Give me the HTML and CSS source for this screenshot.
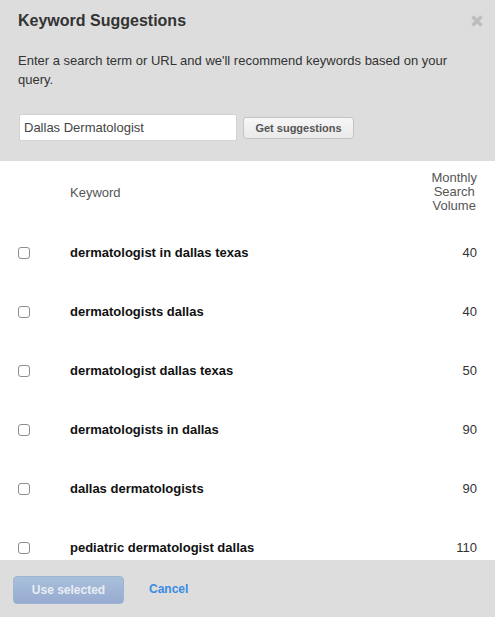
FILE: index.html
```html
<!DOCTYPE html>
<html>
<head>
<meta charset="utf-8">
<link rel="stylesheet" href="styles.css">
</head>
<body>
<div class="modal">
  <div class="head">
    <div class="title-row">
      <h1 class="title">Keyword Suggestions</h1>
      <svg class="close" width="12" height="12" viewBox="0 0 12 12"><path d="M1.5 1.5 L10.5 10.5 M10.5 1.5 L1.5 10.5" stroke="#bdbdbd" stroke-width="3.4" stroke-linecap="butt"/></svg>
    </div>
    <p class="desc">Enter a search term or URL and we'll recommend keywords based on your query.</p>
    <div class="search">
      <div class="input">Dallas Dermatologist</div>
      <div class="btn-get">Get suggestions</div>
    </div>
  </div>
  <div class="body">
    <div class="thead">
      <div class="c-check"></div>
      <div class="c-kw th">Keyword</div>
      <div class="c-vol th vol-head">Monthly<br>Search<br>Volume</div>
    </div>
    <div class="row"><div class="c-check"><span class="cb"></span></div><div class="c-kw kw">dermatologist in dallas texas</div><div class="c-vol num">40</div></div>
    <div class="row"><div class="c-check"><span class="cb"></span></div><div class="c-kw kw">dermatologists dallas</div><div class="c-vol num">40</div></div>
    <div class="row"><div class="c-check"><span class="cb"></span></div><div class="c-kw kw">dermatologist dallas texas</div><div class="c-vol num">50</div></div>
    <div class="row"><div class="c-check"><span class="cb"></span></div><div class="c-kw kw">dermatologists in dallas</div><div class="c-vol num">90</div></div>
    <div class="row"><div class="c-check"><span class="cb"></span></div><div class="c-kw kw">dallas dermatologists</div><div class="c-vol num">90</div></div>
    <div class="row"><div class="c-check"><span class="cb"></span></div><div class="c-kw kw">pediatric dermatologist dallas</div><div class="c-vol num">110</div></div>
  </div>
  <div class="foot">
    <div class="btn-use">Use selected</div>
    <a class="cancel">Cancel</a>
  </div>
</div>
</body>
</html>
```

FILE: styles.css
```css
html, body {
  margin: 0;
  padding: 0;
  background: #ffffff;
}
body {
  font-family: "Liberation Sans", Arial, sans-serif;
  color: #333;
}
.modal {
  width: 495px;
  height: 617px;
  display: flex;
  flex-direction: column;
  overflow: hidden;
}
.head {
  background: #dddddd;
  height: 161px;
  box-sizing: border-box;
  padding: 10px 18px 0 18px;
}
.title-row {
  display: flex;
  justify-content: space-between;
  align-items: center;
  height: 20px;
}
.title {
  margin: 0;
  font-size: 16px;
  font-weight: bold;
  color: #333;
  line-height: 20px;
  padding-top: 1px;
}
.close {
  margin-right: -6px;
  margin-top: 2px;
}
.desc {
  margin: 21px 0 0 0;
  font-size: 13px;
  line-height: 19px;
  color: #333;
}
.search {
  display: flex;
  align-items: center;
  gap: 6px;
  margin-top: 25px;
}
.input {
  width: 218px;
  height: 27px;
  box-sizing: border-box;
  background: #fff;
  border: 1px solid #d2d2d2;
  border-radius: 2px;
  font-size: 13px;
  color: #444;
  line-height: 25px;
  padding-left: 4px;
  margin-left: 1px;
}
.btn-get {
  width: 111px;
  height: 22px;
  box-sizing: border-box;
  border: 1px solid #c4c4c4;
  border-radius: 3px;
  background: linear-gradient(#f7f7f7, #e9e9e9);
  font-size: 11px;
  font-weight: bold;
  color: #555;
  text-align: center;
  line-height: 20px;
}
.body {
  height: 399px;
  overflow: hidden;
  background: #fff;
}
.thead, .row {
  display: flex;
  align-items: center;
}
.thead {
  height: 62px;
  box-sizing: border-box;
}
.row {
  height: 59px;
}
.c-check {
  width: 70px;
  padding-left: 18px;
  box-sizing: border-box;
  display: flex;
  align-items: center;
}
.c-kw {
  flex: 1;
}
.c-vol {
  padding-right: 18px;
  text-align: right;
}
.th {
  font-size: 13px;
  color: #555;
}
.vol-head {
  text-align: center;
  line-height: 14px;
}
.cb {
  display: block;
  width: 12px;
  height: 12px;
  box-sizing: border-box;
  border: 1px solid #8e8e8e;
  border-radius: 3px;
  background: #fff;
}
.kw {
  font-size: 13px;
  font-weight: bold;
  color: #111;
}
.num {
  font-size: 13px;
  color: #333;
}
.foot {
  background: #dddddd;
  flex: 1;
  display: flex;
  align-items: center;
  padding: 0 0 0 13px;
  gap: 25px;
}
.btn-use {
  width: 111px;
  height: 28px;
  box-sizing: border-box;
  border-radius: 4px;
  background: linear-gradient(#a9c0da, #97abd1);
  border: 1px solid #9fb3d3;
  color: #e8edf4;
  font-size: 12px;
  font-weight: bold;
  text-align: center;
  line-height: 26px;
  margin-top: 2px;
}
.cancel {
  font-size: 12px;
  font-weight: bold;
  color: #3a8be4;
  margin-top: 1px;
}
```
